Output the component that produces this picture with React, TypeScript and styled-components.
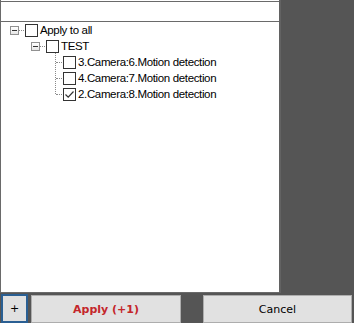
import React from 'react';
import styled, { createGlobalStyle } from 'styled-components';

const GlobalStyle = createGlobalStyle`
  html, body {
    margin: 0;
    padding: 0;
    background: #555555;
  }
  body {
    width: 354px;
    height: 323px;
    overflow: hidden;
    font-family: 'Liberation Sans', Arial, sans-serif;
  }
`;

interface Inode {
  label: string;
  checked?: boolean;
}

const cameras: Inode[] = [
  { label: '3.Camera:6.Motion detection' },
  { label: '4.Camera:7.Motion detection' },
  { label: '2.Camera:8.Motion detection', checked: true },
];

export default function App() {
  return (
    <>
      <GlobalStyle />
      <Window>
        <Top>
          <Panel>
            <Header />
            <Tree>
              <Row $indent={9}>
                <Expander />
                <DotLine />
                <CheckBox />
                <Label>Apply to all</Label>
              </Row>
              <Row $indent={30}>
                <Expander />
                <DotLine />
                <CheckBox />
                <Label>TEST</Label>
              </Row>
              {cameras.map((cam, i) => (
                <Row key={cam.label} $indent={54}>
                  <Branch $last={i === cameras.length - 1} />
                  <CheckBox>
                    {cam.checked && (
                      <svg width='11' height='11' viewBox='0 0 11 11'>
                        <polyline points='1.5,5.5 4.2,8.2 9.5,2.5' fill='none' stroke='#333' strokeWidth='1.2' />
                      </svg>
                    )}
                  </CheckBox>
                  <Label>{cam.label}</Label>
                </Row>
              ))}
            </Tree>
          </Panel>
          <Side />
        </Top>
        <Buttons>
          <Button $width={27} $focused>
            +
          </Button>
          <Button $width={150} $primary>
            Apply (+1)
          </Button>
          <Spacer />
          <Button $width={149}>Cancel</Button>
        </Buttons>
      </Window>
    </>
  );
}

const Window = styled.div`
  display: flex;
  flex-direction: column;
  width: 354px;
  height: 323px;
`;

const Top = styled.div`
  display: flex;
  height: 293px;
`;

const Panel = styled.div`
  width: 279px;
  display: flex;
  flex-direction: column;
  background: #ffffff;
  border-left: 1px solid #6a6a6a;
  border-bottom: 1px solid #6a6a6a;
  box-sizing: border-box;
`;

const Side = styled.div`
  flex: 1;
  background: #555555;
  border-left: 2px solid #626262;
`;

const Header = styled.div`
  height: 19px;
  margin-top: 1px;
  border-top: 1px solid #6a6a6a;
  border-bottom: 1px solid #6a6a6a;
  background: #ffffff;
`;

const Tree = styled.div`
  display: flex;
  flex-direction: column;
`;

const Row = styled.div<{ $indent: number }>`
  display: flex;
  align-items: center;
  height: 16px;
  padding-left: ${(p) => p.$indent}px;
`;

const Expander = styled.span`
  position: relative;
  width: 9px;
  height: 9px;
  box-sizing: border-box;
  border: 1px solid #919191;
  background: linear-gradient(#ffffff, #e6e6e6);

  &::after {
    content: '';
    position: absolute;
    left: 1px;
    right: 1px;
    top: 3px;
    height: 1px;
    background: #333333;
  }
`;

const DotLine = styled.span`
  width: 5px;
  margin: 0 1px 0 0;
  border-top: 1px dotted #8a8a8a;
`;

const Branch = styled.span<{ $last?: boolean }>`
  position: relative;
  width: 8px;
  height: 16px;

  &::before {
    content: '';
    position: absolute;
    left: 0;
    top: -1px;
    height: ${(p) => (p.$last ? '9px' : '17px')};
    border-left: 1px dotted #8a8a8a;
  }

  &::after {
    content: '';
    position: absolute;
    left: 1px;
    right: 1px;
    top: 8px;
    border-top: 1px dotted #8a8a8a;
  }
`;

const CheckBox = styled.span`
  display: flex;
  align-items: center;
  justify-content: center;
  width: 13px;
  height: 13px;
  box-sizing: border-box;
  border: 1px solid #333333;
  background: #ffffff;
`;

const Label = styled.span`
  margin-left: 2px;
  font-size: 11.5px;
  letter-spacing: -0.35px;
  color: #000000;
  white-space: nowrap;
`;

const Buttons = styled.div`
  display: flex;
  align-items: stretch;
  gap: 3px;
  padding: 1px 2px 0 1px;
  height: 30px;
  box-sizing: border-box;
`;

const Spacer = styled.div`
  width: 16px;
`;

const Button = styled.div<{ $width: number; $primary?: boolean; $focused?: boolean }>`
  display: flex;
  align-items: center;
  justify-content: center;
  width: ${(p) => p.$width}px;
  box-sizing: border-box;
  margin-top: ${(p) => (p.$focused ? 0 : 1)}px;
  background: #e1e1e1;
  border: ${(p) => (p.$focused ? '2px solid #2a5f93' : '1px solid #adadad')};
  font-family: 'DejaVu Sans', Verdana, sans-serif;
  font-size: 11px;
  font-weight: ${(p) => (p.$primary ? 700 : 400)};
  color: ${(p) => (p.$primary ? '#c4262b' : '#000000')};
`;
